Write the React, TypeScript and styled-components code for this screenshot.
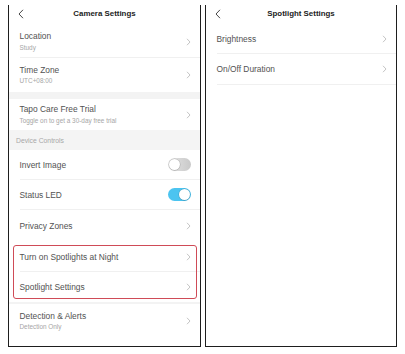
import React from "react";
import styled, { createGlobalStyle } from "styled-components";

const GlobalStyle = createGlobalStyle`
  html, body { margin: 0; padding: 0; background: #ffffff; }
  body { font-family: "Liberation Sans", Arial, Helvetica, sans-serif; -webkit-font-smoothing: antialiased; }
`;

const Page = styled.div`
  display: flex;
  gap: 4px;
  padding: 5px 0 0 8px;
`;

const Panel = styled.div<{ $w: number }>`
  width: ${(p) => p.$w}px;
  height: 342px;
  box-sizing: border-box;
  border: 1.7px solid #1e1e1e;
  border-top: none;
  display: flex;
  flex-direction: column;
  overflow: hidden;
`;

const Header = styled.div<{ $h: number }>`
  height: ${(p) => p.$h}px;
  flex: none;
  display: grid;
  grid-template-columns: 1fr auto 1fr;
  align-items: start;
  padding-top: 4px;
  box-sizing: border-box;
`;

const Back = styled.div`
  justify-self: start;
  margin-left: 9px;
  display: flex;
  align-items: center;
`;

const Title = styled.div`
  font-size: 7.9px;
  font-weight: 700;
  line-height: 10px;
  color: #222;
  white-space: nowrap;
`;

const Row = styled.div<{ $h: number; $line?: boolean }>`
  height: ${(p) => p.$h}px;
  flex: none;
  box-sizing: border-box;
  margin-left: 10.5px;
  padding-right: 9px;
  display: flex;
  align-items: center;
  justify-content: space-between;
  border-bottom: ${(p) => (p.$line ? "1px solid #f0f0f0" : "none")};
`;

const Texts = styled.div`
  display: flex;
  flex-direction: column;
  gap: 2.5px;
`;

const Label = styled.div`
  font-size: 8.4px;
  color: #525252;
  line-height: 10px;
  white-space: nowrap;
`;

const Sub = styled.div`
  font-size: 6.4px;
  color: #a6a6a6;
  line-height: 8px;
  white-space: nowrap;
`;

const Band = styled.div<{ $h: number }>`
  height: ${(p) => p.$h}px;
  flex: none;
  background: #f3f3f3;
`;

const SectionLabel = styled.div`
  height: 20px;
  flex: none;
  background: #f4f4f4;
  padding-left: 7px;
  display: flex;
  align-items: center;
  font-size: 6.8px;
  color: #a8a8a8;
`;

const Highlight = styled.div`
  position: relative;
  display: flex;
  flex-direction: column;
  &::after {
    content: "";
    position: absolute;
    top: 3px;
    bottom: 3px;
    left: 3.5px;
    right: 3px;
    border: 1px solid #cf4b57;
    border-radius: 3px;
    pointer-events: none;
  }
`;

const Track = styled.div<{ $on: boolean }>`
  width: 23px;
  height: 13px;
  border-radius: 7px;
  box-sizing: border-box;
  background: ${(p) => (p.$on ? "#4cc4f0" : "linear-gradient(90deg, #e6e6e6, #c9c9c9)")};
  display: flex;
  align-items: center;
  justify-content: ${(p) => (p.$on ? "flex-end" : "flex-start")};
  padding: 0 1px;
`;

const Knob = styled.div`
  width: 11px;
  height: 11px;
  border-radius: 50%;
  background: #ffffff;
  box-shadow: 0 0 0 0.5px rgba(0, 0, 0, 0.15), 0 0.5px 1px rgba(0, 0, 0, 0.2);
`;

const Chevron = () => (
  <svg width="5" height="8" viewBox="0 0 5 8">
    <path d="M1 0.8 L4 4 L1 7.2" fill="none" stroke="#b5b5b5" strokeWidth="0.8" />
  </svg>
);

const BackIcon = () => (
  <svg width="6" height="10" viewBox="0 0 6 10">
    <path d="M5 0.8 L1 5 L5 9.2" fill="none" stroke="#333" strokeWidth="0.9" />
  </svg>
);

const Toggle = ({ on }: { on: boolean }) => (
  <Track $on={on}>
    <Knob />
  </Track>
);

type ItemProps = { label: string; sub?: string; h: number; line?: boolean; right?: React.ReactNode };

const Item = ({ label, sub, h, line, right }: ItemProps) => (
  <Row $h={h} $line={line}>
    <Texts>
      <Label>{label}</Label>
      {sub && <Sub>{sub}</Sub>}
    </Texts>
    {right ?? <Chevron />}
  </Row>
);

export default function App() {
  return (
    <>
      <GlobalStyle />
      <Page>
        <Panel $w={193}>
          <Header $h={21}>
            <Back>
              <BackIcon />
            </Back>
            <Title>Camera Settings</Title>
            <span />
          </Header>
          <Item label="Location" sub="Study" h={32} line />
          <Item label="Time Zone" sub="UTC+08:00" h={34} />
          <Band $h={7} />
          <Item label="Tapo Care Free Trial" sub="Toggle on to get a 30-day free trial" h={31} />
          <SectionLabel>Device Controls</SectionLabel>
          <Item label="Invert Image" h={30} line right={<Toggle on={false} />} />
          <Item label="Status LED" h={30} line right={<Toggle on />} />
          <Item label="Privacy Zones" h={32} />
          <Highlight>
            <Item label="Turn on Spotlights at Night" h={30} line />
            <Item label="Spotlight Settings" h={30} />
          </Highlight>
          <Band $h={2} />
          <Item label="Detection & Alerts" sub="Detection Only" h={34} />
        </Panel>
        <Panel $w={192}>
          <Header $h={19}>
            <Back>
              <BackIcon />
            </Back>
            <Title>Spotlight Settings</Title>
            <span />
          </Header>
          <Item label="Brightness" h={30} line />
          <Item label="On/Off Duration" h={31} line />
        </Panel>
      </Page>
    </>
  );
}
